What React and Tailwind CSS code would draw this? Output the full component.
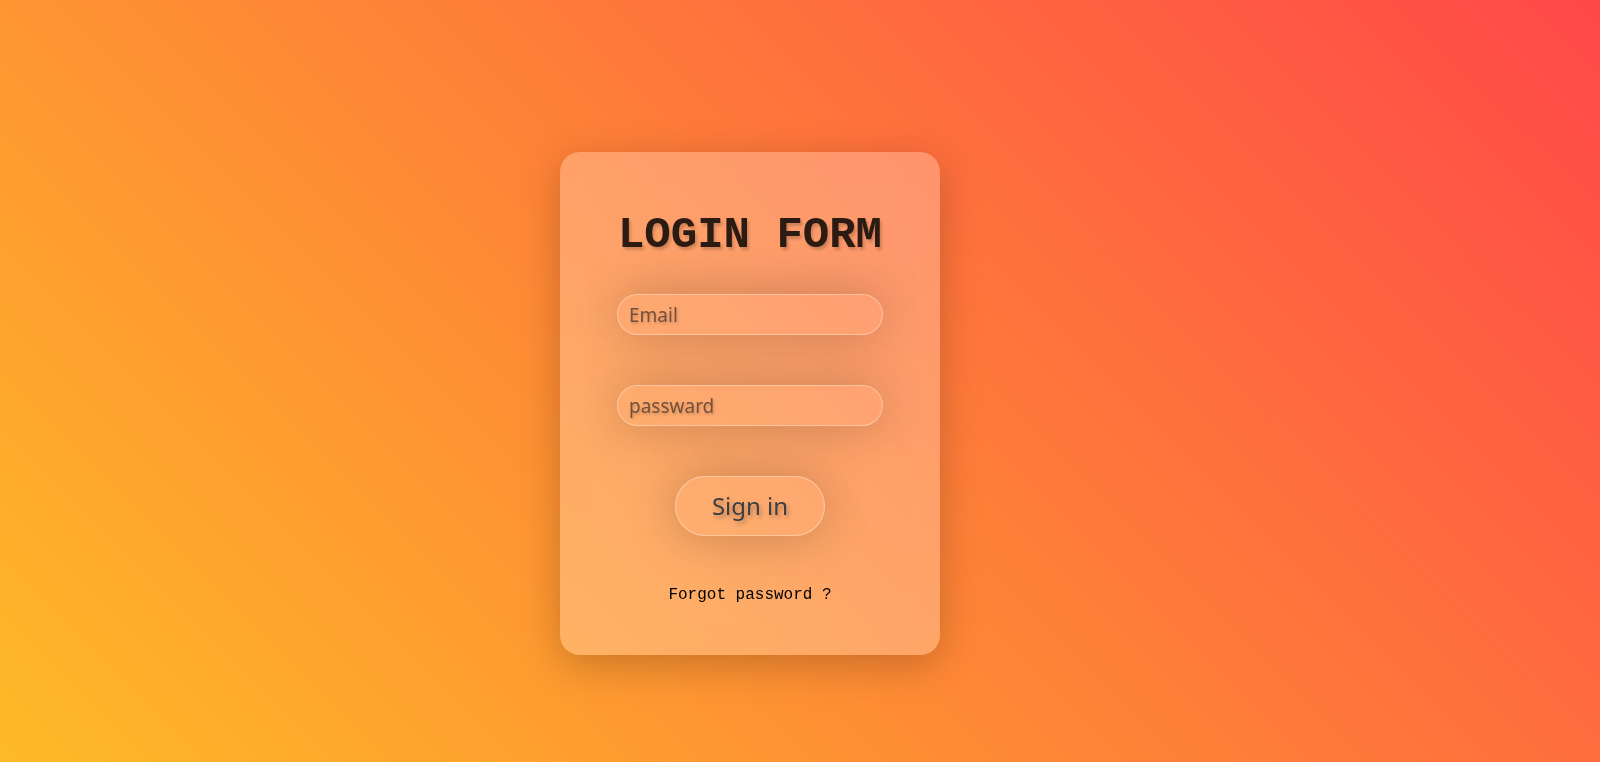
export default function App() {
  return (
    <div className="flex h-[762px] w-full items-start bg-[linear-gradient(45deg,#feba27_0%,#ff4848_100%)]">
      {/* login card */}
      <div className="ml-[560px] mt-[152px] flex h-[503px] w-[380px] flex-col items-center rounded-[20px] bg-white/25 pt-[57px] shadow-[0_10px_40px_rgba(0,0,0,0.22)] backdrop-blur-md">
        <h1 className="font-['Liberation_Mono',monospace] text-[44px] font-bold leading-[52px] text-[#2b1b12] [text-shadow:2px_3px_3px_rgba(0,0,0,0.18)]">
          LOGIN FORM
        </h1>

        <input
          type="email"
          placeholder="Email"
          className="mt-[33px] h-[41px] w-[266px] rounded-full border border-white/35 bg-white/5 px-[11px] font-['Noto_Sans',sans-serif] text-[19px] text-[#5e4232] shadow-[0_0_50px_rgba(0,0,0,0.22)] outline-none placeholder:text-[#74503c] [text-shadow:1px_2px_3px_rgba(0,0,0,0.2)]"
        />

        <input
          type="password"
          placeholder="passward"
          className="mt-[50px] h-[41px] w-[266px] rounded-full border border-white/35 bg-white/5 px-[11px] font-['Noto_Sans',sans-serif] text-[19px] text-[#5e4232] shadow-[0_0_50px_rgba(0,0,0,0.22)] outline-none placeholder:text-[#74503c] [text-shadow:1px_2px_3px_rgba(0,0,0,0.2)]"
        />

        <button className="mt-[50px] h-[60px] w-[150px] rounded-full border border-white/35 bg-white/5 font-['Noto_Sans',sans-serif] text-[24px] text-[#3b3f44] shadow-[0_0_50px_rgba(0,0,0,0.22)] [text-shadow:2px_3px_4px_rgba(0,0,0,0.3)]">
          Sign in
        </button>

        <a
          href="#"
          className="mt-[50px] font-['Liberation_Mono',monospace] text-[16px] leading-[18px] text-black"
        >
          Forgot password ?
        </a>
      </div>
    </div>
  );
}
